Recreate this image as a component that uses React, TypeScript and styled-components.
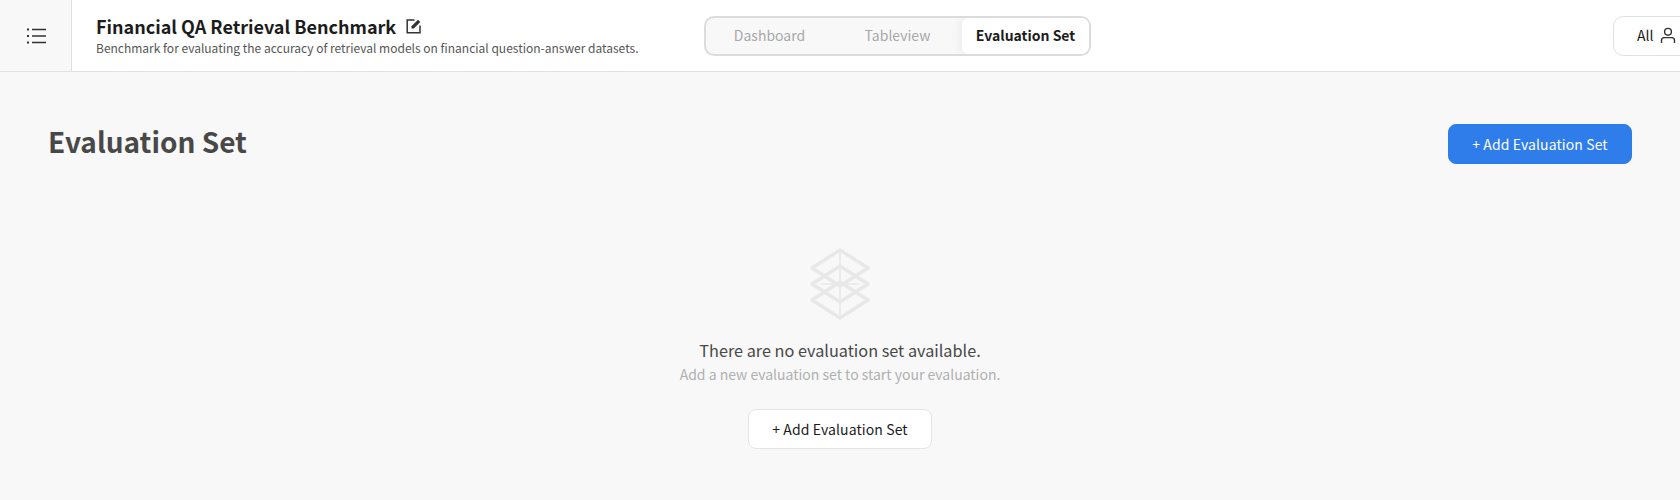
import React from "react"
import styled, { createGlobalStyle } from "styled-components"

const GlobalStyle = createGlobalStyle`
  html, body {
    margin: 0;
    padding: 0;
    background: #f8f8f8;
    overflow: hidden;
  }
  * {
    box-sizing: border-box;
  }
  body {
    font-family: "Noto Sans CJK KR", "Noto Sans", sans-serif;
  }
`

const Page = styled.div`
  width: 1680px;
  height: 500px;
  overflow: hidden;
  display: flex;
  flex-direction: column;
  background: #f8f8f8;
`

const Header = styled.header`
  height: 72px;
  flex: none;
  display: flex;
  align-items: center;
  background: #fff;
  border-bottom: 1px solid #e2e2e2;
  overflow: hidden;
`

const MenuCell = styled.div`
  width: 72px;
  height: 71px;
  flex: none;
  display: flex;
  align-items: center;
  justify-content: center;
  padding-left: 1px;
  background: #f8f8f8;
  border-right: 1px solid #dfdfdf;
`

const TitleBlock = styled.div`
  width: 608px;
  flex: none;
  margin-left: 24px;
  padding-bottom: 2px;
  display: flex;
  flex-direction: column;
`

const TitleRow = styled.div`
  display: flex;
  align-items: center;
  gap: 10px;
`

const Title = styled.h1`
  margin: 0;
  font-size: 18px;
  line-height: 26px;
  font-weight: 700;
  color: #1c1c1c;
`

const Subtitle = styled.p`
  margin: 0;
  font-size: 12px;
  line-height: 18px;
  color: #555;
`

const Tabs = styled.div`
  width: 387px;
  height: 40px;
  flex: none;
  display: flex;
  border: 2px solid #dcdcdc;
  border-radius: 10px;
  background: #f8f8f8;
  overflow: hidden;
`

const Tab = styled.div<{ $active?: boolean; $width: number }>`
  width: ${(p) => p.$width}px;
  padding-bottom: 1px;
  display: flex;
  align-items: center;
  justify-content: center;
  font-size: 14px;
  font-weight: ${(p) => (p.$active ? 700 : 400)};
  color: ${(p) => (p.$active ? "#1c1c1c" : "#a8a8a8")};
  background: ${(p) => (p.$active ? "#fff" : "transparent")};
  border-radius: ${(p) => (p.$active ? "6px 0 0 6px" : "0")};
  box-shadow: ${(p) => (p.$active ? "-4px 0 8px rgba(0, 0, 0, 0.04)" : "none")};
`

const UserButton = styled.div`
  width: 120px;
  height: 40px;
  flex: none;
  margin-left: auto;
  margin-right: -53px;
  padding: 0 0 1px 23px;
  display: flex;
  align-items: center;
  gap: 7px;
  font-size: 14px;
  color: #1c1c1c;
  background: #fff;
  border: 1px solid #e2e2e2;
  border-radius: 10px;
`

const Main = styled.main`
  flex: 1;
  display: flex;
  flex-direction: column;
  padding: 52px 48px 0;
`

const TopRow = styled.div`
  display: flex;
  align-items: flex-start;
  justify-content: space-between;
`

const Heading = styled.h2`
  margin: 0;
  font-size: 28px;
  line-height: 34px;
  font-weight: 700;
  color: #484848;
`

const Button = styled.button<{ $primary?: boolean }>`
  width: 184px;
  height: 40px;
  padding: 0;
  font-family: inherit;
  font-size: 14px;
  font-weight: 400;
  letter-spacing: 0.1px;
  color: ${(p) => (p.$primary ? "#fff" : "#1c1c1c")};
  background: ${(p) => (p.$primary ? "#2e7dea" : "#fff")};
  border: 1px solid ${(p) => (p.$primary ? "#2e7dea" : "#e4e4e4")};
  border-radius: 8px;
`

const Empty = styled.div`
  margin-top: 84px;
  display: flex;
  flex-direction: column;
  align-items: center;
`

const EmptyTitle = styled.div`
  margin-top: 18px;
  font-size: 16.25px;
  line-height: 24px;
  color: #484848;
`

const EmptyText = styled.div`
  margin-top: 2px;
  margin-bottom: 25px;
  font-size: 14px;
  line-height: 20px;
  color: #b0b0b0;
`

const MenuIcon = () => (
  <svg width="19" height="16" viewBox="0 0 19 16" fill="none" stroke="#333" strokeWidth="1.5">
    <path d="M5 1.5h14M5 8h14M5 14.5h14" />
    <path d="M0 1.5h2M0 8h2M0 14.5h2" strokeWidth="2" />
  </svg>
)

const EditIcon = () => (
  <svg width="16" height="16" viewBox="0 0 16 16" fill="none">
    <path d="M8.5 2H1.2v12.8H14V7.5" stroke="#333" strokeWidth="1.5" />
    <path d="M5.5 10.5V8.2L12 1.7l2.3 2.3-6.5 6.5z" fill="#333" />
  </svg>
)

const UserIcon = () => (
  <svg width="16" height="17" viewBox="0 0 16 17" fill="none" stroke="#333" strokeWidth="1.4">
    <circle cx="8" cy="4.8" r="3.4" />
    <path d="M1.5 16v-2.6c0-1.6 1.2-2.8 2.8-2.8h7.4c1.6 0 2.8 1.2 2.8 2.8V16" />
  </svg>
)

const StackIcon = () => (
  <svg width="62" height="72" viewBox="0 0 62 72" fill="none" stroke="#e8e8e8" strokeWidth="3.4" strokeLinejoin="round">
    <path d="M31 2 59 20 31 38 3 20z" />
    <path d="M31 18 59 36 31 54 3 36z" />
    <path d="M31 34 59 52 31 70 3 52z" />
    <path d="M31 2v68M12 36h38" strokeWidth="1.6" />
  </svg>
)

const App: React.FC = () => {
  return (
    <Page>
      <GlobalStyle />
      <Header>
        <MenuCell>
          <MenuIcon />
        </MenuCell>
        <TitleBlock>
          <TitleRow>
            <Title>Financial QA Retrieval Benchmark</Title>
            <EditIcon />
          </TitleRow>
          <Subtitle>Benchmark for evaluating the accuracy of retrieval models on financial question-answer datasets.</Subtitle>
        </TitleBlock>
        <Tabs>
          <Tab $width={127}>Dashboard</Tab>
          <Tab $width={129}>Tableview</Tab>
          <Tab $width={127} $active>
            Evaluation Set
          </Tab>
        </Tabs>
        <UserButton>
          All
          <UserIcon />
        </UserButton>
      </Header>
      <Main>
        <TopRow>
          <Heading>Evaluation Set</Heading>
          <Button $primary>+ Add Evaluation Set</Button>
        </TopRow>
        <Empty>
          <StackIcon />
          <EmptyTitle>There are no evaluation set available.</EmptyTitle>
          <EmptyText>Add a new evaluation set to start your evaluation.</EmptyText>
          <Button>+ Add Evaluation Set</Button>
        </Empty>
      </Main>
    </Page>
  )
}

export default App
